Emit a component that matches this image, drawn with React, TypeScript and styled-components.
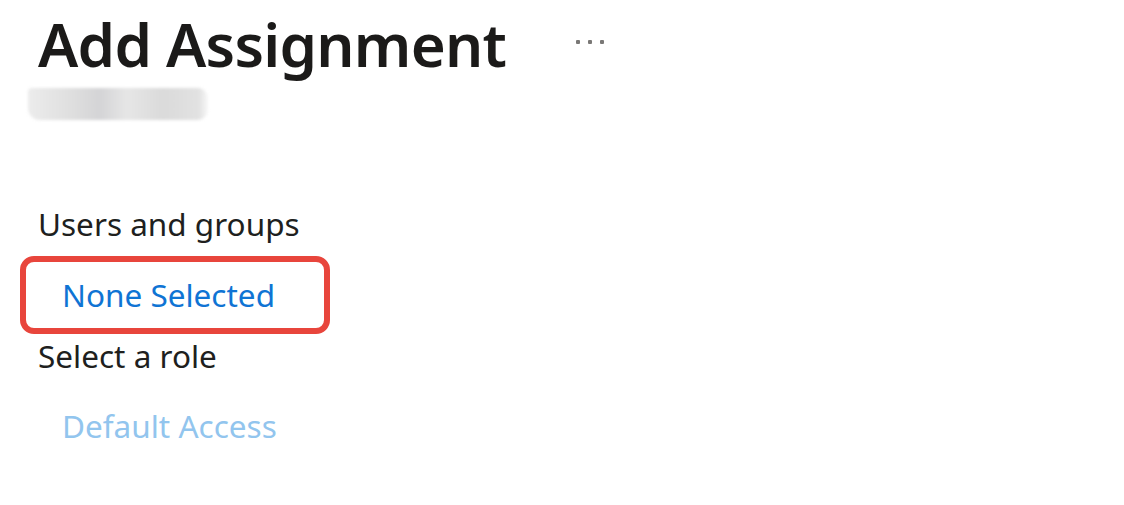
import styled, { createGlobalStyle } from 'styled-components';

const GlobalStyle = createGlobalStyle`
  html, body {
    margin: 0;
    padding: 0;
    background: #ffffff;
  }
  body {
    font-family: "Noto Sans", "Open Sans", sans-serif;
    color: #201f1e;
  }
`;

const Page = styled.div`
  width: 1124px;
  height: 505px;
  padding: 0 0 0 38px;
  box-sizing: border-box;
  display: flex;
  flex-direction: column;
  overflow: hidden;
`;

const Header = styled.div`
  display: flex;
  align-items: center;
  gap: 70px;
  height: 88px;
`;

const Title = styled.h1`
  margin: 0;
  font-size: 60px;
  font-weight: 600;
  color: #1b1a19;
  line-height: 88px;
  letter-spacing: -0.75px;
`;

const More = styled.span`
  display: flex;
  gap: 8px;
  margin-top: -4px;
`;

const Dot = styled.span`
  width: 4px;
  height: 4px;
  border-radius: 1px;
  background: #7a7876;
`;

const Redacted = styled.div`
  margin: 0 0 0 -10px;
  width: 180px;
  height: 32px;
  border-radius: 4px 10px 10px 12px;
  background: linear-gradient(
    90deg,
    #ececec 0%,
    #dedede 25%,
    #d4d4d6 40%,
    #e6e6e6 55%,
    #dadada 75%,
    #e2e2e2 95%,
    #f8f8f8 100%
  );
  filter: blur(1.5px);
`;

const Section = styled.div`
  display: flex;
  flex-direction: column;
  margin-top: 84px;
`;

const Label = styled.div`
  font-size: 31.5px;
  line-height: 40px;
  color: #201f1e;
`;

const Highlight = styled.div`
  align-self: flex-start;
  margin: 12px 0 2px -18px;
  width: 310px;
  height: 78px;
  box-sizing: border-box;
  border: 6px solid #e8453c;
  border-radius: 14px;
  display: flex;
  align-items: center;
  padding-left: 36px;
`;

const Link = styled.a<{ $disabled?: boolean }>`
  font-size: 31.5px;
  line-height: 40px;
  color: ${(p) => (p.$disabled ? '#92c5ee' : '#0f74d4')};
  text-decoration: none;
  cursor: pointer;
`;

const RoleLink = styled.div`
  margin: 30px 0 0 24px;
`;

export default function App() {
  return (
    <>
      <GlobalStyle />
      <Page>
        <Header>
          <Title>Add Assignment</Title>
          <More>
            <Dot />
            <Dot />
            <Dot />
          </More>
        </Header>
        <Redacted />
        <Section>
          <Label>Users and groups</Label>
          <Highlight>
            <Link>None Selected</Link>
          </Highlight>
          <Label>Select a role</Label>
          <RoleLink>
            <Link $disabled>Default Access</Link>
          </RoleLink>
        </Section>
      </Page>
    </>
  );
}
